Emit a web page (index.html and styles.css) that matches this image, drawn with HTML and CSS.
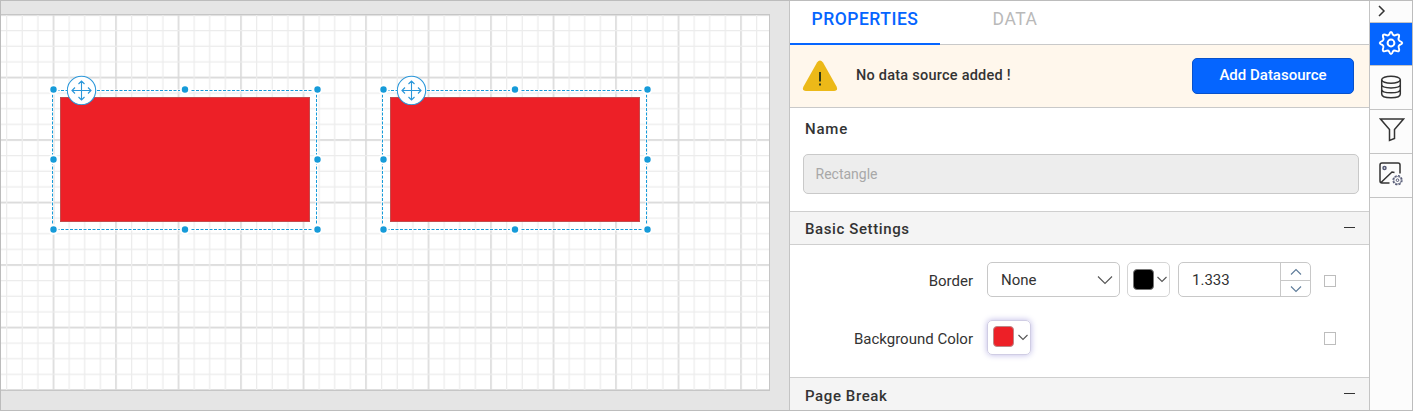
FILE: index.html
```html
<!DOCTYPE html>
<html lang="en">
<head>
<meta charset="utf-8">
<title>Report Designer</title>
<link rel="stylesheet" href="styles.css">
</head>
<body>
<svg class="defs" width="0" height="0">
  <symbol id="move" viewBox="0 0 30 30">
    <circle cx="14.500" cy="15.500" r="14.200" fill="#fff" stroke="#2a97da" stroke-width="1.100"/>
    <path d="M14.500 6V25M5 15.500H24M11.500 9L14.500 6L17.500 9M11.500 22L14.500 25L17.500 22M8 12.500L5 15.500L8 18.500M21 12.500L24 15.500L21 18.500" fill="none" stroke="#2a97da" stroke-width="1.100"/>
  </symbol>
  <symbol id="selection" viewBox="0 0 276 152">
    <rect x="12" y="14" width="250" height="125" fill="#ed2027"/>
    <rect x="12.500" y="14.500" width="249" height="124" fill="none" stroke="#9a7672" stroke-dasharray="1 1"/>
    <path d="M4 7.500H269M4 146.500H269M4.500 7V147M268.500 7V147" fill="none" stroke="#fff" stroke-width="2"/>
    <path d="M4 7.500H269M4 146.500H269M4.500 7V147M268.500 7V147" fill="none" stroke="#169bd9" stroke-dasharray="3 1.500"/>
    <g fill="#169bd9" stroke="#fff" stroke-width="2">
      <circle cx="5.500" cy="6.500" r="4.200"/><circle cx="137" cy="6.500" r="4.200"/><circle cx="269.500" cy="6.500" r="4.200"/>
      <circle cx="5.500" cy="76.500" r="4.200"/><circle cx="269.500" cy="76.500" r="4.200"/>
      <circle cx="5.500" cy="146.500" r="4.200"/><circle cx="137" cy="146.500" r="4.200"/><circle cx="269.500" cy="146.500" r="4.200"/>
    </g>
  </symbol>
</svg>
<div class="app">
  <main class="workspace">
    <div class="page">
      <svg class="grid" width="768" height="375">
        <defs>
          <pattern id="major" x="44.688" y="-7.812" width="62.500" height="62.500" patternUnits="userSpaceOnUse">
            <path d="M7.812 0V62.500M0 7.812H62.500" stroke="#d9d9d9" stroke-width="1.600"/>
          </pattern>
          <pattern id="minor" x="44.688" y="-7.812" width="62.500" height="62.500" patternUnits="userSpaceOnUse">
            <path d="M23.438 0V62.500M39.062 0V62.500M54.688 0V62.500M0 23.438H62.500M0 39.062H62.500M0 54.688H62.500" stroke="#ececec" stroke-width="1.300"/>
          </pattern>
        </defs>
        <rect width="768" height="375" fill="url(#major)"/>
        <rect width="768" height="375" fill="url(#minor)"/>
      </svg>
    </div>
    <svg class="shape shape-a"><use href="#selection"/></svg>
    <svg class="shape shape-b"><use href="#selection"/></svg>
    <svg class="handle handle-a"><use href="#move"/></svg>
    <svg class="handle handle-b"><use href="#move"/></svg>
  </main>
  <aside class="panel">
    <nav class="tabs"><div class="tab active">PROPERTIES</div><div class="tab">DATA</div></nav>
    <div class="notice">
      <svg class="warn" width="36" height="32" viewBox="0 0 36 32">
        <path d="M15 2.500Q18-1.500 21 2.500L34.500 26.500Q36.500 31 32 31H4Q-.5 31 1.500 26.500Z" fill="#ecb918"/>
        <path d="M18 12V21.500M18 23.500V25.500" stroke="#303a18" stroke-width="2"/>
      </svg>
      <span class="message">No data source added !</span>
      <button class="add">Add Datasource</button>
    </div>
    <div class="name">
      <div class="name-label">Name</div>
      <div class="name-input">Rectangle</div>
    </div>
    <div class="section"><span>Basic Settings</span><i class="minus"></i></div>
    <div class="settings">
      <div class="row">
        <span class="label">Border</span>
        <div class="select"><span>None</span><svg width="16" height="10"><path d="M1 1.500L8 8.500L15 1.500"/></svg></div>
        <div class="color"><i class="swatch black"></i><svg width="10" height="7"><path d="M.5 1L5 5.500L9.500 1"/></svg></div>
        <div class="number"><span>1.333</span><div class="spin"><div><svg width="12" height="8"><path d="M1 6.500L6 1.500L11 6.500"/></svg></div><div><svg width="12" height="8"><path d="M1 1.500L6 6.500L11 1.500"/></svg></div></div></div>
        <i class="check"></i>
      </div>
      <div class="row">
        <span class="label">Background Color</span>
        <div class="color focus"><i class="swatch red"></i><svg width="10" height="7"><path d="M.5 1L5 5.500L9.500 1"/></svg></div>
        <i class="check"></i>
      </div>
    </div>
    <div class="section last"><span>Page Break</span><i class="minus"></i></div>
  </aside>
  <nav class="rail">
    <div class="collapse"><svg width="8" height="12" viewBox="0 0 8 12"><path d="M1 1L6 6L1 11" stroke-width="1.500"/></svg></div>
    <div class="tool current"><svg width="26" height="26" viewBox="0 0 26 26"><path d="M11.200 4.500Q13-.7 14.800 4.500Q15.600 5.700 17 5.300Q22.700 2.700 20.500 8.500Q20.200 10.200 21.500 10.900Q27 13 21.500 15Q20.200 15.900 20.700 17.500Q22.700 23 17.300 20.700Q15.700 20.200 14.900 21.500Q13 26.700 11.100 21.500Q10.300 20.200 8.700 20.700Q3.300 23 5.300 17.500Q5.800 15.900 4.500 15Q-1 13 4.500 10.900Q5.800 10.200 5.500 8.500Q3.300 2.700 9 5.300Q10.400 5.700 11.200 4.500Z" stroke-width="2"/><circle cx="13" cy="13" r="3.400" stroke-width="2"/></svg></div>
    <div class="tool"><svg width="26" height="26" viewBox="0 0 26 26"><ellipse cx="13" cy="5.700" rx="9.300" ry="3.500"/><path d="M3.700 5.700V20C3.700 25 22.300 25 22.300 20V5.700M3.700 10.500C3.700 15 22.300 15 22.300 10.500M3.700 15.200C3.700 20 22.300 20 22.300 15.200"/></svg></div>
    <div class="tool filter"><svg width="26" height="26" viewBox="0 0 26 26"><path d="M1.500 2H24.500L15.500 12.500V21.500L10.500 23.500V12.500Z"/></svg></div>
    <div class="tool image"><svg width="26" height="26" viewBox="0 0 26 26"><path d="M11.500 22H4Q2 22 2 20V4Q2 2 4 2H20Q22 2 22 4V12.500M3 21.500L14 11L16.500 11.500"/><circle cx="6.500" cy="7" r="1.500"/><circle cx="19.500" cy="19.200" r="4.500" stroke-dasharray="2.200 1.330" stroke-width="1.300"/><circle cx="19.500" cy="19.200" r="3.700" stroke-width=".7"/><circle cx="19.500" cy="19.200" r="1.300" stroke-width="1"/></svg></div>
  </nav>
</div>
</body>
</html>
```
FILE: styles.css
```css
* { box-sizing: border-box; }
body { margin: 0; font-family: Roboto, "Liberation Sans", sans-serif; font-size: 15px; color: #333; }
svg { display: block; flex: none; }
.defs { position: absolute; }
.app { display: flex; width: 1413px; height: 411px; border: 1px solid #bcbcbc; overflow: hidden; background: #fff; }

.workspace { position: relative; width: 788px; background: #e5e5e5; padding-top: 13px; }
.page { width: 769px; height: 377px; background: #fff; border: solid #c6c6c6; border-width: 1px 1px 1px 0; }
.shape, .handle { position: absolute; }
.shape { width: 276px; height: 152px; top: 82px; }
.shape-a { left: 47px; }
.shape-b { left: 377px; }
.handle { width: 30px; height: 30px; top: 74px; }
.handle-a { left: 66px; }
.handle-b { left: 396px; }

.panel { width: 580px; border-left: 1px solid #c4c4c4; }
.tabs { display: flex; height: 44px; border-bottom: 1px solid #c9c9c9; }
.tab { width: 150px; height: 44px; text-align: center; line-height: 36px; font-size: 17.500px; letter-spacing: .5px; font-weight: 400; color: #b9b9b9; }
.tab.active { color: #0565ff; font-weight: 500; border-bottom: 2px solid #0565ff; }
.notice { display: flex; align-items: center; height: 63px; padding: 0 15px 0 12px; background: #fff7ec; border-bottom: 1px solid #c9c9c9; }
.message { margin-left: 18px; font-weight: 500; font-size: 14.500px; letter-spacing: .24px; line-height: 20px; }
.add { margin-left: auto; width: 162px; height: 36px; border: 1px solid #0751cb; border-radius: 5px; background: #0565ff; color: #fff; font: 500 15px Roboto, sans-serif; padding: 0 0 2px; }
.name { height: 103px; padding: 11px 10px 0 13px; }
.name-label { padding-left: 2px; line-height: 20px; font-weight: 500; letter-spacing: .8px; }
.name-input { height: 40px; width: 556px; margin-top: 15px; border: 1px solid #c9c9c9; border-radius: 5px; background: #ededed; color: #a8a8a8; font-size: 14px; line-height: 39px; padding-left: 11.500px; }
.section { display: flex; justify-content: space-between; height: 34px; border: solid #cfcfcf; border-width: 1px 0; background: #f4f4f4; padding: 0 14px 0 15px; line-height: 34px; font-weight: 500; letter-spacing: .6px; }
.section.last { line-height: 36px; }
.minus { width: 11px; height: 1px; margin-top: 15px; background: #333; }
.settings { height: 132px; padding-top: 17px; }
.row { display: flex; height: 35px; margin-bottom: 23px; }
.label { width: 183px; margin-right: 14px; text-align: right; line-height: 38px; }
.row path { fill: none; stroke: #555; stroke-width: 1.100; }
.select { display: flex; align-items: center; justify-content: space-between; width: 133px; border: 1px solid #c8c8c8; border-radius: 5px; padding: 0 6px 0 13px; }
.color { display: flex; align-items: center; justify-content: space-between; width: 43px; margin-left: 7px; border: 1px solid #d5d5d5; border-radius: 5px; padding: 0 2px 0 5px; }
.color.focus { width: 44px; margin-left: 0; border-color: #d0cde4; box-shadow: 0 0 6px #bdb8e6; }
.swatch { width: 21px; height: 21px; border: 1px solid #777; border-radius: 4px; }
.black { background: #000; }
.red { background: #ed2027; border-color: #b88; margin-bottom: 2px; }
.number { display: flex; justify-content: space-between; width: 133px; margin-left: 8px; border: 1px solid #c8c8c8; border-radius: 5px; padding-left: 13px; line-height: 34px; }
.spin { width: 30px; border-left: 1px solid #c8c8c8; }
.spin div { height: 17px; display: flex; align-items: center; justify-content: center; }
.spin div + div { border-top: 1px solid #c8c8c8; }
.spin path { stroke: #5d7b99; }
.check { width: 12px; height: 12px; margin: 13px 0 0 13px; border: 1px solid #bdbdbd; }
.focus + .check { margin: 12px 0 0 293px; height: 13px; }

.rail { width: 43px; border-left: 1px solid #c4c4c4; background: #fcfcfc; }
.rail path, .rail circle, .rail ellipse { fill: none; stroke: #333; }
.rail svg { stroke-width: 1.500; }
.collapse { height: 22px; padding: 4px 0 0 8px; border-bottom: 1px solid #c4c4c4; }
.tool { height: 44px; display: flex; align-items: center; justify-content: center; border-bottom: 1px solid #c4c4c4; padding-bottom: 2px; }
.tool.current { height: 43px; background: #0565ff; }
.tool.filter { padding: 0 0 3px 1px; }
.tool.image { padding-bottom: 4px; }
.image circle { stroke: #555a75; }
.rail .current path, .rail .current circle { stroke: #fff; }
```
